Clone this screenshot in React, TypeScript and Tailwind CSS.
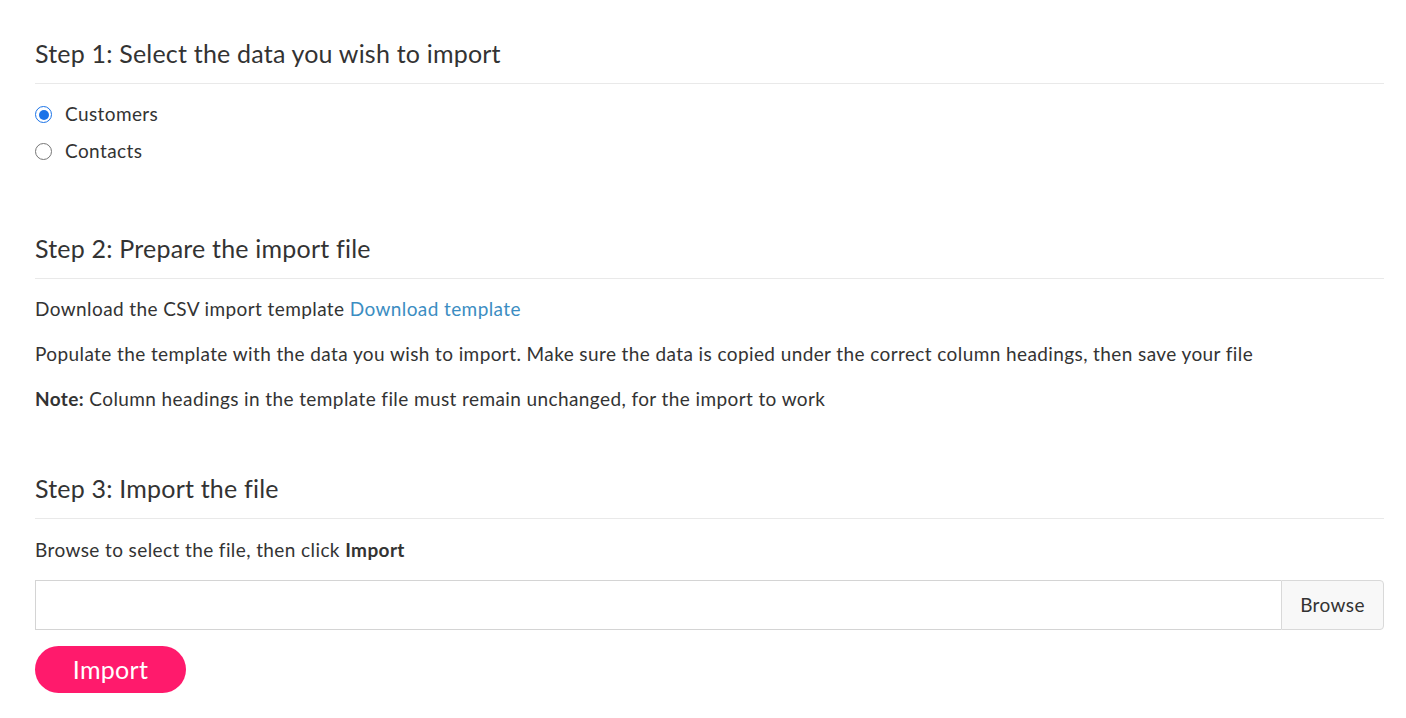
import React, { useState } from 'react';

const font = { fontFamily: 'Lato, "Noto Sans", sans-serif' };

const StepHeading = ({ children }: { children: React.ReactNode }) => (
  <div className="border-b border-[#e9e9e9] pb-[15px]">
    <h2 className="text-[25px] leading-[30px] tracking-[0.2px] text-[#333]">{children}</h2>
  </div>
);

const Radio = ({ checked, label, onChange }: { checked: boolean; label: string; onChange: () => void }) => (
  <label className="flex items-center h-[37px] cursor-pointer" onClick={onChange}>
    <span
      className={
        checked
          ? 'w-[17px] h-[17px] rounded-full border-[1.5px] border-[#1a73e8] flex items-center justify-center'
          : 'w-[17px] h-[17px] rounded-full border-[1.5px] border-[#767676]'
      }
    >
      {checked && <span className="w-[10px] h-[10px] rounded-full bg-[#1a73e8]" />}
    </span>
    <span className="ml-[13px] text-[19px] tracking-[0.4px] text-[#333]">{label}</span>
  </label>
);

export default function App() {
  const [type, setType] = useState('customers');

  return (
    <div className="bg-white min-h-screen pl-[35px] pr-[22px] pt-[38px] text-[#333]" style={font}>
      <StepHeading>Step 1: Select the data you wish to import</StepHeading>
      <div className="pt-[12px]">
        <Radio checked={type === 'customers'} label="Customers" onChange={() => setType('customers')} />
        <Radio checked={type === 'contacts'} label="Contacts" onChange={() => setType('contacts')} />
      </div>

      <div className="mt-[63px]">
        <StepHeading>Step 2: Prepare the import file</StepHeading>
      </div>
      <div className="text-[19px] leading-[26px] tracking-[0.4px]">
        <p className="mt-[17px]">
          Download the CSV import template <a href="#" className="text-[#3b8dc2]">Download template</a>
        </p>
        <p className="mt-[19px]">
          Populate the template with the data you wish to import. Make sure the data is copied under the correct column headings, then save your file
        </p>
        <p className="mt-[19px]">
          <b className="font-bold">Note:</b> Column headings in the template file must remain unchanged, for the import to work
        </p>
      </div>

      <div className="mt-[61px]">
        <StepHeading>Step 3: Import the file</StepHeading>
      </div>
      <p className="mt-[18px] text-[19px] leading-[26px] tracking-[0.4px]">
        Browse to select the file, then click <b className="font-bold">Import</b>
      </p>
      <div className="flex mt-[17px] h-[50px]">
        <div className="flex-1 border border-[#d4d4d4] border-r-0" />
        <button className="w-[103px] border border-[#d9d9d9] rounded-r-[4px] bg-[#f8f8f8] text-[19px] tracking-[0.4px] text-[#333]">
          Browse
        </button>
      </div>
      <button className="mt-[16px] w-[151px] h-[47px] rounded-full bg-[#ff1a6c] text-white text-[25px] tracking-[0.3px]">
        Import
      </button>
    </div>
  );
}
